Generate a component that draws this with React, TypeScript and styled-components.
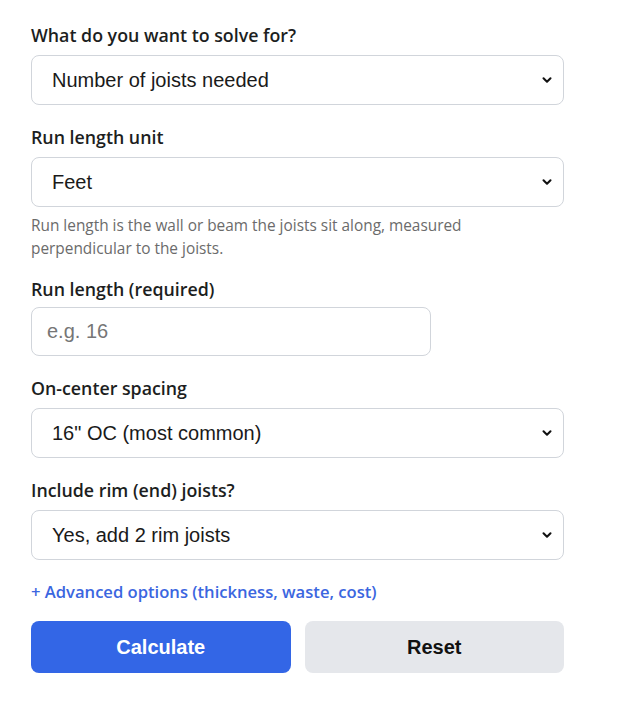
import styled, { createGlobalStyle } from 'styled-components'
import { ChevronDown } from 'lucide-react'

/* global */
const GlobalStyle = createGlobalStyle`
  body {
    margin: 0;
    background: #fff;
    font-family: 'Open Sans', 'Noto Sans', sans-serif;
    color: #1f2328;
  }
`

type Option = { value: string; label: string }

const Form = styled.form`
  width: 533px;
  padding: 23px 0 0 31px;
  display: flex;
  flex-direction: column;
  gap: 20px;
`

const Field = styled.div`
  display: flex;
  flex-direction: column;
`

const Label = styled.label<{ $tight?: boolean }>`
  font-size: 17.8px;
  font-weight: 600;
  line-height: 24px;
  margin: 0 0 ${({ $tight }) => ($tight ? '6px' : '8px')};
  color: #1c1e21;
`

const SelectWrap = styled.div`
  position: relative;
  width: 100%;
`

const Select = styled.select`
  appearance: none;
  width: 100%;
  height: 50px;
  box-sizing: border-box;
  padding: 0 40px 0 20px;
  border: 1px solid #d1d5db;
  border-radius: 8px;
  background: #fff;
  font-family: 'Liberation Sans', Arial, sans-serif;
  font-size: 20px;
  color: #1a1a1a;
`

const Chevron = styled(ChevronDown)`
  position: absolute;
  right: 10px;
  top: 50%;
  transform: translateY(-50%);
  pointer-events: none;
  color: #111;
`

const Input = styled.input<{ $width?: number }>`
  width: ${({ $width }) => ($width ? `${$width}px` : '100%')};
  height: 49px;
  box-sizing: border-box;
  padding: 0 15px;
  border: 1px solid #d1d5db;
  border-radius: 8px;
  font-family: 'Liberation Sans', Arial, sans-serif;
  font-size: 20px;
  color: #1a1a1a;

  &::placeholder {
    color: #767676;
  }
`

const Help = styled.p`
  margin: 7px 0 -3px;
  font-size: 15.4px;
  line-height: 23px;
  color: #6b6b6b;
  max-width: 470px;
`

const AdvancedLink = styled.a`
  font-size: 16.6px;
  line-height: 24px;
  font-weight: 600;
  color: #3b66e0;
  text-decoration: none;
  cursor: pointer;
`

const Buttons = styled.div`
  display: grid;
  grid-template-columns: 1fr 1fr;
  gap: 14px;
  margin-top: -3px;
`

const Button = styled.button<{ $variant: 'primary' | 'secondary' }>`
  height: 52px;
  border: none;
  border-radius: 8px;
  font-family: 'Liberation Sans', Arial, sans-serif;
  font-size: 20px;
  font-weight: 700;
  cursor: pointer;
  background: ${({ $variant }) => ($variant === 'primary' ? '#3366e6' : '#e5e7eb')};
  color: ${({ $variant }) => ($variant === 'primary' ? '#fff' : '#111')};
`

const SelectField = ({ id, label, options, help }: { id: string; label: string; options: Option[]; help?: string }) => (
  <Field>
    <Label htmlFor={id}>{label}</Label>
    <SelectWrap>
      <Select id={id} defaultValue={options[0].value}>
        {options.map((o) => (
          <option key={o.value} value={o.value}>
            {o.label}
          </option>
        ))}
      </Select>
      <Chevron size={14} strokeWidth={3.5} />
    </SelectWrap>
    {help && <Help>{help}</Help>}
  </Field>
)

export default function App() {
  return (
    <>
      <GlobalStyle />
      <Form onSubmit={(e) => e.preventDefault()}>
        <SelectField
          id="solve"
          label="What do you want to solve for?"
          options={[
            { value: 'count', label: 'Number of joists needed' },
            { value: 'spacing', label: 'Spacing between joists' },
          ]}
        />
        <SelectField
          id="unit"
          label="Run length unit"
          options={[
            { value: 'ft', label: 'Feet' },
            { value: 'm', label: 'Meters' },
          ]}
          help="Run length is the wall or beam the joists sit along, measured perpendicular to the joists."
        />
        <Field>
          <Label htmlFor="run" $tight>
            Run length (required)
          </Label>
          <Input id="run" placeholder="e.g. 16" $width={400} />
        </Field>
        <SelectField
          id="spacing"
          label="On-center spacing"
          options={[
            { value: '16', label: '16" OC (most common)' },
            { value: '12', label: '12" OC' },
            { value: '24', label: '24" OC' },
          ]}
        />
        <SelectField
          id="rim"
          label="Include rim (end) joists?"
          options={[
            { value: 'yes', label: 'Yes, add 2 rim joists' },
            { value: 'no', label: 'No' },
          ]}
        />
        <AdvancedLink>+ Advanced options (thickness, waste, cost)</AdvancedLink>
        <Buttons>
          <Button type="submit" $variant="primary">
            Calculate
          </Button>
          <Button type="button" $variant="secondary">
            Reset
          </Button>
        </Buttons>
      </Form>
    </>
  )
}
